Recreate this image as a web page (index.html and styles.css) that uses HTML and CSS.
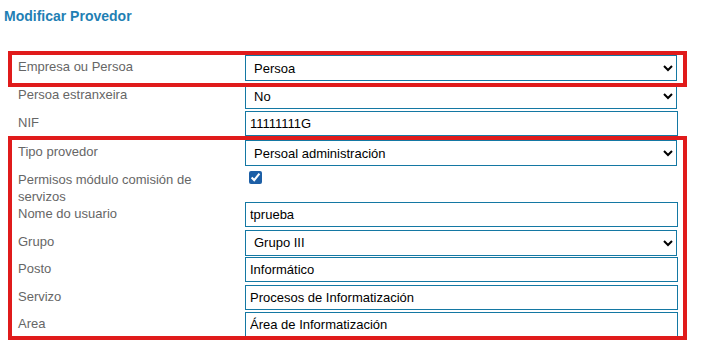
FILE: index.html
```html
<!DOCTYPE html>
<html lang="gl">
<head>
<meta charset="utf-8">
<title>Modificar Provedor</title>
<link rel="stylesheet" href="styles.css">
</head>
<body>
<div class="page">
  <h1 class="title">Modificar Provedor</h1>
  <form class="form">
    <div class="group group-top">
      <div class="row">
        <label class="lbl">Empresa ou Persoa</label>
        <div class="field"><select class="sel"><option>Persoa</option><option>Empresa</option></select></div>
      </div>
    </div>
    <div class="row">
      <label class="lbl">Persoa estranxeira</label>
      <div class="field"><select class="sel"><option>No</option><option>Si</option></select></div>
    </div>
    <div class="row">
      <label class="lbl">NIF</label>
      <div class="field"><input class="inp" type="text" value="11111111G"></div>
    </div>
    <div class="group group-main">
      <div class="row row-main">
        <label class="lbl">Tipo provedor</label>
        <div class="field"><select class="sel"><option>Persoal administración</option></select></div>
      </div>
      <div class="row row-tall">
        <label class="lbl">Permisos módulo comisión de servizos</label>
        <div class="field"><input class="chk" type="checkbox" checked></div>
      </div>
      <div class="row row-main">
        <label class="lbl">Nome do usuario</label>
        <div class="field"><input class="inp" type="text" value="tprueba"></div>
      </div>
      <div class="row row-main">
        <label class="lbl">Grupo</label>
        <div class="field"><select class="sel"><option>Grupo III</option></select></div>
      </div>
      <div class="row row-main">
        <label class="lbl">Posto</label>
        <div class="field"><input class="inp" type="text" value="Informático"></div>
      </div>
      <div class="row row-main">
        <label class="lbl">Servizo</label>
        <div class="field"><input class="inp" type="text" value="Procesos de Informatización"></div>
      </div>
      <div class="row row-main">
        <label class="lbl">Area</label>
        <div class="field"><input class="inp" type="text" value="Área de Informatización"></div>
      </div>
    </div>
  </form>
</div>
</body>
</html>
```
FILE: styles.css
```css
html, body {
  margin: 0;
  padding: 0;
  background: #ffffff;
  font-family: "Liberation Sans", Arial, sans-serif;
}

.page {
  padding: 8px 0 12px 0;
}

.title {
  margin: 0 0 0 4px;
  font-size: 14px;
  line-height: 17px;
  font-weight: bold;
  color: #1f7fb4;
}

.form {
  margin: 30px 0 0 12px;
  width: 671px;
}

.group {
  outline: 4px solid #e01b1b;
  outline-offset: 0;
}

.group-main {
  margin-top: 1px;
  height: 196px;
}

.row {
  display: grid;
  grid-template-columns: 233px 433px;
  height: 28px;
}

.row-main {
  height: 27.5px;
}

.row-tall {
  height: 34.5px;
}

.lbl {
  box-sizing: border-box;
  padding: 3px 20px 0 6px;
  font-size: 13px;
  line-height: 17px;
  color: #666666;
}

.field {
  display: flex;
  align-items: flex-start;
}

.sel {
  box-sizing: border-box;
  width: 432px;
  height: 26px;
  margin: 0;
  padding: 0 0 0 4px;
  border: 1px solid #1478a3;
  border-radius: 0;
  background: #ffffff;
  color: #000000;
  font-family: "Liberation Sans", Arial, sans-serif;
  font-size: 13px;
}

.inp {
  box-sizing: border-box;
  width: 433px;
  height: 25px;
  margin: 0;
  padding: 0 4px;
  border: 1px solid #1478a3;
  border-radius: 0;
  background: #ffffff;
  color: #000000;
  font-family: "Liberation Sans", Arial, sans-serif;
  font-size: 13px;
  outline: none;
}

.chk {
  width: 13px;
  height: 13px;
  margin: 3px 0 0 4px;
  accent-color: #1d5fa6;
}
```
